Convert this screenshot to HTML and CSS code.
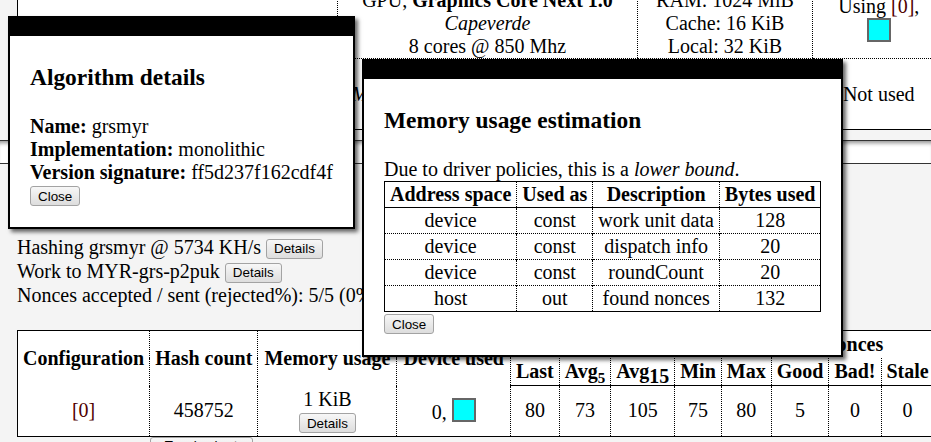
FILE: index.html
```html
<!DOCTYPE html>
<html>
<head>
<meta charset="utf-8">
<link rel="stylesheet" href="styles.css">
</head>
<body>
<div class="page">
  <table class="devices">
    <colgroup><col class="w-a"><col class="w-b"><col class="w-c"><col class="w-d"></colgroup>
    <tr class="r1">
      <td class="lowered"><b>AMD Radeon HD 7700 validated</b></td>
      <td>GPU, <b>Graphics Core Next 1.0</b><br><i>Capeverde</i><br>8 cores @ 850 Mhz</td>
      <td>RAM: 1024 MiB<br>Cache: 16 KiB<br>Local: 32 KiB</td>
      <td class="raised">Using <span class="idx">[0]</span>,<br><span class="swatch top"></span></td>
    </tr>
    <tr class="r2">
      <td><b>Cape Verde</b></td>
      <td><i>Max allocation 256 MiB, 2 blocks</i></td>
      <td>Image support</td>
      <td>Not used</td>
    </tr>
  </table>
  <div class="bar"></div>
  <div class="status">
    <div class="line">Hashing grsmyr @ 5734 KH/s <button class="btn">Details</button></div>
    <div class="line">Work to MYR-grs-p2puk <button class="btn">Details</button></div>
    <div class="line">Nonces accepted / sent (rejected%): 5/5 (0%)</div>
  </div>
  <table class="perf">
    <thead>
      <tr>
        <th rowspan="2">Configuration</th>
        <th rowspan="2">Hash count</th>
        <th rowspan="2" class="roomy">Memory usage</th>
        <th rowspan="2" class="roomy">Device used</th>
        <th colspan="5">Scan time [ms]</th>
        <th colspan="3">Nonces</th>
      </tr>
      <tr>
        <th>Last</th>
        <th>Avg<sub class="s5">5</sub></th>
        <th>Avg<sub>15</sub></th>
        <th>Min</th>
        <th>Max</th>
        <th>Good</th>
        <th>Bad!</th>
        <th>Stale</th>
      </tr>
    </thead>
    <tbody>
      <tr>
        <td><span class="idx">[0]</span></td>
        <td>458752</td>
        <td>1 KiB<br><button class="btn">Details</button></td>
        <td>0, <span class="swatch"></span></td>
        <td>80</td>
        <td>73</td>
        <td>105</td>
        <td>75</td>
        <td>80</td>
        <td>5</td>
        <td>0</td>
        <td>0</td>
      </tr>
    </tbody>
  </table>
  <div class="after">Performance tab<button class="btn wide">Toggle chart view</button></div>
</div>

<div class="dialog algo">
  <div class="title"></div>
  <div class="content">
    <h3>Algorithm details</h3>
    <div><b>Name:</b> grsmyr</div>
    <div><b>Implementation:</b> monolithic</div>
    <div><b>Version signature:</b> ff5d237f162cdf4f</div>
    <div><button class="btn">Close</button></div>
  </div>
</div>

<div class="dialog mem">
  <div class="title"></div>
  <div class="content">
    <h3>Memory usage estimation</h3>
    <div>Due to driver policies, this is a <i>lower bound</i>.</div>
    <table class="memtable">
      <thead>
        <tr><th>Address space</th><th>Used as</th><th>Description</th><th>Bytes used</th></tr>
      </thead>
      <tbody>
        <tr><td>device</td><td>const</td><td>work unit data</td><td>128</td></tr>
        <tr><td>device</td><td>const</td><td>dispatch info</td><td>20</td></tr>
        <tr><td>device</td><td>const</td><td>roundCount</td><td>20</td></tr>
        <tr><td>host</td><td>out</td><td>found nonces</td><td>132</td></tr>
      </tbody>
    </table>
    <div><button class="btn">Close</button></div>
  </div>
</div>
</body>
</html>
```
FILE: styles.css
```css
html, body {
  margin: 0;
  padding: 0;
}
body {
  background: #f4f4f4;
  font-family: "Liberation Serif", "Times New Roman", serif;
  font-size: 20px;
  color: #000;
  width: 931px;
  height: 442px;
  overflow: hidden;
  position: relative;
}
.page {
  margin-top: -11px;
}
.idx {
  color: #500000;
}
.swatch {
  display: inline-block;
  width: 20px;
  height: 20px;
  border: 2px solid #666;
  background: #00ffff;
  vertical-align: -3px;
}
.swatch.top {
  vertical-align: baseline;
}
.btn {
  font-family: "Liberation Sans", Arial, sans-serif;
  font-size: 13.4px;
  color: #000;
  height: 20px;
  padding: 0 7px;
  border: 1px solid #a3a3a3;
  border-radius: 3px;
  background: linear-gradient(#f7f7f7, #dddddd);
  vertical-align: 1px;
}
.wide {
  width: 103px;
  margin-left: 1px;
}

/* top device table */
.devices {
  margin-left: 17px;
  border-collapse: collapse;
  table-layout: fixed;
  width: 927px;
  background: #fff;
  border-left: 1px solid #000;
  border-bottom: 1px solid #000;
}
.w-a { width: 320px; }
.w-b { width: 300px; }
.w-c { width: 175px; }
.w-d { width: 132px; }
.devices td {
  padding: 0 2px;
  text-align: center;
  vertical-align: middle;
  line-height: 23px;
  white-space: nowrap;
}
.devices td + td {
  border-left: 1px dotted #000;
}
.devices .r1 td {
  height: 69px;
  border-bottom: 1px dotted #000;
}
.devices .r1 td.lowered {
  height: 55px;
  padding-top: 14px;
}
.devices .r1 td.raised {
  height: 64px;
  padding-bottom: 5px;
}
.devices .r2 td {
  height: 70px;
}

.bar {
  margin-top: 10px;
  height: 22px;
  background: #fff;
  border-top: 1px solid #333;
  border-bottom: 1px solid #333;
  box-shadow: inset 0 5px 4px -3px rgba(0, 0, 0, 0.45);
}

.status {
  margin: 71px 0 0 17px;
}
.status .line {
  height: 24px;
  line-height: 24px;
  white-space: nowrap;
}

/* performance table */
.perf {
  margin: 23px 0 0 17px;
  border-collapse: collapse;
  background: #fff;
  border: 1px solid #000;
  white-space: nowrap;
}
.perf th, .perf td {
  padding: 2px 5px;
  line-height: 23px;
  text-align: center;
  vertical-align: middle;
}
.perf th.roomy {
  padding: 2px 6px;
}
.perf th + th, .perf td + td {
  border-left: 1px dotted #000;
}
.perf thead tr:last-child th:first-child {
  border-left: 1px dotted #000;
}
.perf thead tr:last-child th {
  border-bottom: 1px solid #000;
}
.perf sub {
  line-height: 0;
  font-size: 20px;
}
.perf sub.s5 {
  font-size: 15px;
}
.after {
  margin-left: 17px;
  line-height: 23px;
}

/* dialogs */
.dialog {
  position: absolute;
  background: #fff;
  border: 2px solid #000;
  box-shadow: 3px 3px 4px rgba(0, 0, 0, 0.6);
}
.dialog .title {
  height: 18px;
  background: #000;
}
.dialog .content {
  padding: 5px 20px 20px;
  line-height: 23px;
  white-space: nowrap;
}
.dialog h3 {
  font-size: 23.4px;
  line-height: 27px;
  margin: 23.4px 0;
}
.algo {
  left: 8px;
  top: 16px;
}
.mem {
  left: 362px;
  top: 59px;
}
.memtable {
  border-collapse: collapse;
  border: 1px solid #000;
}
.memtable th, .memtable td {
  padding: 1px 5px;
  line-height: 23px;
  text-align: center;
}
.memtable th + th, .memtable td + td {
  border-left: 1px dotted #000;
}
.memtable th {
  border-bottom: 1px solid #000;
}
.memtable tbody tr + tr td {
  border-top: 1px dotted #000;
}
```
